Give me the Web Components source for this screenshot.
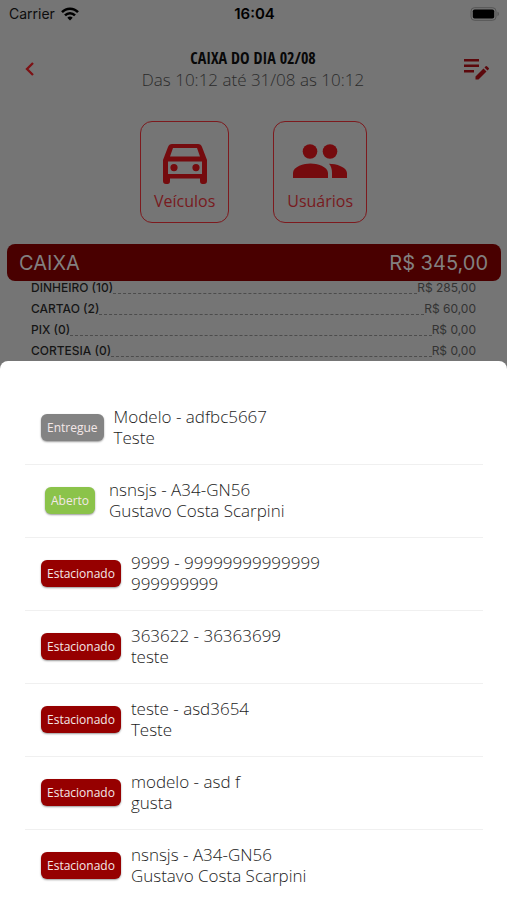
<!DOCTYPE html>
<html lang="pt-BR">
<head>
<meta charset="utf-8">
<meta name="viewport" content="width=device-width, initial-scale=1">
<title>Caixa do dia</title>
<style>
  html, body { height: 100%; }
  body { margin: 0; overflow: hidden; background: #757575; font-family: "Open Sans", "Noto Sans", sans-serif; }
</style>
</head>
<body>
<cash-app></cash-app>
<script>
const define = (name, html, setup) => customElements.define(name, class extends HTMLElement {
  connectedCallback() {
    if (this.shadowRoot) return;
    const root = this.attachShadow({ mode: "open" });
    const template = document.createElement("template");
    template.innerHTML = html;
    root.append(template.content.cloneNode(true));
    if (setup) setup(this, root);
  }
});

define("status-bar", `
  <style>
    :host { display: grid; grid-template-columns: 1fr auto 1fr; align-items: center; height: 28px; padding: 0 7px 0 9px; color: #0d0d0d; font: 400 14px/16px Inter, sans-serif; }
    .carrier { display: flex; align-items: center; gap: 6px; }
    .time { font-weight: 600; font-size: 15px; color: #000; }
    .battery { justify-self: end; display: block; }
  </style>
  <span class="carrier">Carrier
    <svg width="18" height="14" viewBox="0 0 18 14" fill="none" stroke="#000" stroke-width="2.5" aria-hidden="true">
      <path d="M1 5.200C5.400.5 12.600.5 17 5.200"/><path d="M4 8.300c2.800-2.900 7.200-2.900 10 0"/>
      <path d="M6.300 10.700C7.800 9.200 10.200 9.200 11.700 10.700L9 13.400Z" fill="#000" stroke="none"/>
    </svg>
  </span>
  <span class="time">16:04</span>
  <svg class="battery" width="30" height="14" viewBox="0 0 30 14" aria-hidden="true">
    <rect x="1" y=".7" width="25" height="12.600" rx="3.500" fill="none" stroke="#555"/>
    <rect x="2.800" y="2.500" width="21.400" height="9" rx="1.800"/>
    <path d="M27.500 4.800v4.400c1.900-.6 1.900-3.800 0-4.400Z" fill="#555"/>
  </svg>`);

define("page-header", `
  <style>
    :host { display: grid; grid-template-columns: 44px 1fr 44px; align-items: center; padding: 19px 9px 0 8px; }
    button { display: grid; place-items: center; height: 44px; padding: 0; border: 0; background: none; }
    .titles { text-align: center; }
    h1 { margin: 0; color: #080808; font: 700 16px/21px "Open Sans Condensed", "Roboto Condensed", sans-serif; }
    p { margin: 0; color: #2b2b2b; font-weight: 300; font-size: 17px; line-height: 21px; }
  </style>
  <button aria-label="Voltar"><svg width="12" height="16" viewBox="0 0 12 16" fill="none" stroke="#7d1114" stroke-width="2.300"><path d="M9 2 3 8l6 6"/></svg></button>
  <div class="titles"><h1><slot name="title"></slot></h1><p><slot name="period"></slot></p></div>
  <button aria-label="Editar"><svg width="26" height="22" viewBox="0 0 26 22" fill="#5c080c"><path d="M1 1h15v2.500H1zM1 6.500h15V9H1zM1 12h10v2.500H1zM12.500 18.500l8-8 3 3-8 8h-3zM21.500 9.500l1.200-1.200q.6-.6 1.200 0l1.800 1.800q.6.600 0 1.200l-1.200 1.200z"/></svg></button>`);

define("nav-card", `
  <style>
    button { box-sizing: border-box; display: flex; flex-direction: column; align-items: center; justify-content: flex-end; height: 102px; padding: 0 13px 10px; border: 1px solid #7d1a1e; border-radius: 12px; background: none; color: #781a20; font: 400 16px/22px "Open Sans", sans-serif; }
    ::slotted(svg) { display: block; height: 40px; margin-bottom: 6px; fill: #750b0e; }
  </style>
  <button><slot name="icon"></slot><slot></slot></button>`);

define("total-bar", `
  <style>
    :host { display: flex; justify-content: space-between; align-items: center; height: 37px; margin: 21px 6px 0 7px; padding: 0 13px 0 12px; border-radius: 8px; background: #490000; color: #828080; font: 400 20px/30px Inter, sans-serif; }
  </style>
  <span><slot></slot></span><span><slot name="amount"></slot></span>`);

define("total-line", `
  <style>
    :host { display: flex; align-items: center; height: 21px; margin: 0 31px; font: 500 12px/16px Inter, sans-serif; color: #151515; }
    i { flex: 1; height: 6px; margin-top: 6px; border-bottom: 1px dashed #4c4c4c; }
    .amount { color: #333; font-weight: 400; }
  </style>
  <span><slot></slot></span><i></i><span class="amount"><slot name="amount"></slot></span>`);

define("vehicle-item", `
  <style>
    :host { display: flex; align-items: center; box-sizing: border-box; height: 73px; padding: 0 16px 2px; border-bottom: 1px solid #f0f0f0; }
    :host(:last-child) { border-bottom-color: transparent; }
    button { display: block; height: 27px; padding: 0 6px; border: 0; border-radius: 6px; background: #960000; color: #f4e8e8; font: 400 12px/25px "Open Sans", sans-serif; box-shadow: 0 1px 2px #0006; }
    :host([status="Entregue"]) button { background: #838383; }
    :host([status="Aberto"]) { padding-left: 20px; }
    :host([status="Aberto"]) button { background: #8bc34a; }
    .text { flex: 1; min-width: 0; margin-left: 10px; color: #1c1c1c; font-weight: 300; font-size: 17px; line-height: 21px; }
    :host([status="Aberto"]) .text { margin-left: 14px; }
    slot { display: block; }
  </style>
  <button></button>
  <div class="text"><slot name="vehicle"></slot><slot name="owner"></slot></div>`,
  (host, root) => { root.querySelector("button").textContent = host.getAttribute("status"); });

define("bottom-sheet", `
  <style>
    :host { display: block; flex: 1; box-sizing: border-box; padding: 31px 24px 0 25px; border-radius: 8px 8px 0 0; background: #fff; }
  </style>
  <slot></slot>`);

const lines = [["DINHEIRO (10)", "R$ 285,00"], ["CARTAO (2)", "R$ 60,00"], ["PIX (0)", "R$ 0,00"], ["CORTESIA (0)", "R$ 0,00"]];
const vehicles = [
  ["Entregue", "Modelo - adfbc5667", "Teste"],
  ["Aberto", "nsnsjs - A34-GN56", "Gustavo Costa Scarpini"],
  ["Estacionado", "9999 - 99999999999999", "999999999"],
  ["Estacionado", "363622 - 36363699", "teste"],
  ["Estacionado", "teste - asd3654", "Teste"],
  ["Estacionado", "modelo - asd f", "gusta"],
  ["Estacionado", "nsnsjs - A34-GN56", "Gustavo Costa Scarpini"]
];

define("cash-app", `
  <style>
    :host { display: flex; flex-direction: column; min-height: 100vh; }
    nav { display: flex; justify-content: center; gap: 44px; margin-top: 30px; }
    .lines { margin-top: -4px; }
  </style>
  <status-bar></status-bar>
  <page-header><span slot="title">CAIXA DO DIA 02/08</span><span slot="period">Das 10:12 até 31/08 as 10:12</span></page-header>
  <nav>
    <nav-card><svg slot="icon" width="46" viewBox="0 0 46 40"><path fill-rule="evenodd" d="M10 0H36Q39 0 40 3L45 16V37Q45 40 42 40H40.500Q38 40 38 37V34.500H8V37Q8 40 5.500 40H4Q1 40 1 37V16L6 3Q7 0 10 0ZM11 4 8 12.500H38L35 4ZM6 17.500V30H40V17.500ZM12 20a3.600 3.600 0 1 1 0 7.200 3.600 3.600 0 0 1 0-7.200ZM34 20a3.600 3.600 0 1 1 0 7.200 3.600 3.600 0 0 1 0-7.200Z"/></svg>Veículos</nav-card>
    <nav-card><svg slot="icon" width="54" viewBox="0 0 54 40"><circle cx="17" cy="7.500" r="7.300"/><circle cx="37" cy="7.500" r="7.300"/><path d="M0 34V29C0 22.500 11 19.500 17.500 19.500S35 22.500 35 29V34ZM36 19.700C43 19.700 54 23 54 29V34H39V29C39 25 38 22 36 19.700Z"/></svg>Usuários</nav-card>
  </nav>
  <total-bar>CAIXA<span slot="amount">R$ 345,00</span></total-bar>
  <div class="lines"></div>
  <bottom-sheet></bottom-sheet>`,
  (host, root) => {
    root.querySelector(".lines").innerHTML = lines.map(([name, amount]) =>
      `<total-line>${name}<span slot="amount">${amount}</span></total-line>`).join("");
    root.querySelector("bottom-sheet").innerHTML = vehicles.map(([status, vehicle, owner]) =>
      `<vehicle-item status="${status}"><span slot="vehicle">${vehicle}</span><span slot="owner">${owner}</span></vehicle-item>`).join("");
  });
</script>
</body>
</html>
